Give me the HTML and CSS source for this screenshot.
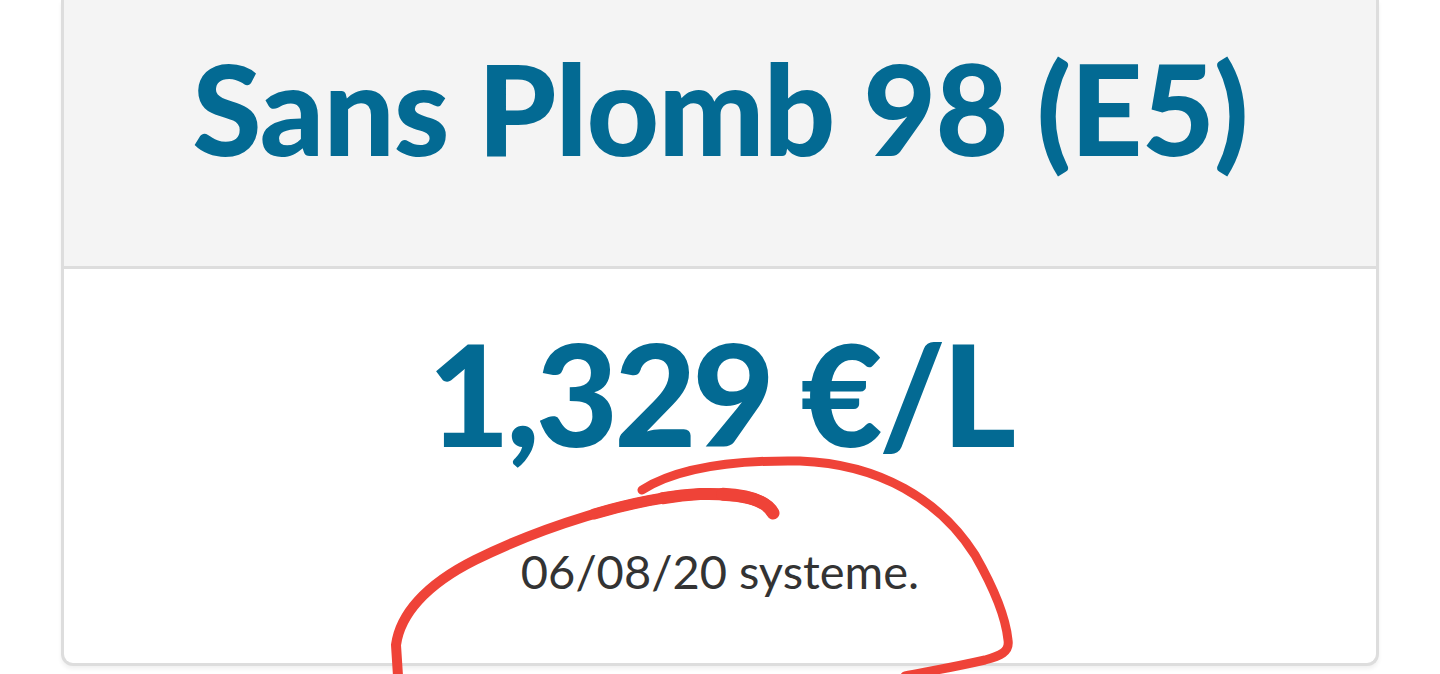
FILE: index.html
```html
<!DOCTYPE html>
<html lang="fr">
<head>
<meta charset="utf-8">
<title>Sans Plomb 98 (E5)</title>
<link rel="stylesheet" href="styles.css">
</head>
<body>
<div class="page">
  <div class="card">
    <div class="card-header">
      <h1 class="fuel-name">Sans Plomb 98 (E5)</h1>
    </div>
    <div class="card-body">
      <div class="price">1,329 €/L</div>
      <div class="date">06/08/20 systeme.</div>
    </div>
  </div>
  <svg class="scribble" width="1440" height="674" viewBox="0 0 1440 674" aria-hidden="true">
    <path d="M642 490 C 680 466, 740 460, 800 461 C 880 464, 940 500, 975 555 C 995 590, 1006 620, 1008 640 C 1010 652, 1000 656, 985 660 C 950 668, 925 672, 905 676" fill="none" stroke="#ef4338" stroke-width="9" stroke-linecap="round" stroke-linejoin="round"/>
    <path d="M773 513 C 765 498, 740 493, 700 494 C 630 498, 540 528, 475 560 C 425 585, 400 615, 396 645 L 398 676" fill="none" stroke="#ef4338" stroke-width="10" stroke-linecap="round" stroke-linejoin="round"/>
    <path pathLength="100" stroke-dasharray="40 200" d="M773 513 C 765 498, 740 493, 700 494 C 630 498, 540 528, 475 560 C 425 585, 400 615, 396 645 L 398 676" fill="none" stroke="#ef4338" stroke-width="11" stroke-linecap="round" stroke-linejoin="round"/>
    <path pathLength="100" stroke-dasharray="25 200" d="M773 513 C 765 498, 740 493, 700 494 C 630 498, 540 528, 475 560 C 425 585, 400 615, 396 645 L 398 676" fill="none" stroke="#ef4338" stroke-width="12" stroke-linecap="round" stroke-linejoin="round"/>
    <path pathLength="100" stroke-dasharray="12 200" d="M773 513 C 765 498, 740 493, 700 494 C 630 498, 540 528, 475 560 C 425 585, 400 615, 396 645 L 398 676" fill="none" stroke="#ef4338" stroke-width="13" stroke-linecap="round" stroke-linejoin="round"/>
  </svg>
</div>
</body>
</html>
```
FILE: styles.css
```css
html, body {
  margin: 0;
  padding: 0;
  background: #ffffff;
}
body {
  width: 1440px;
  height: 674px;
  overflow: hidden;
  font-family: "Lato", "Noto Sans", sans-serif;
}
.page {
  position: relative;
  height: 674px;
  padding: 0 61px;
  box-sizing: border-box;
}
.card {
  width: 1318px;
  box-sizing: border-box;
  border: 3px solid #dddddd;
  border-top: none;
  border-radius: 0 0 12px 12px;
  background: #ffffff;
  box-shadow: 0 3px 4px rgba(0, 0, 0, 0.06);
}
.card-header {
  height: 269px;
  box-sizing: border-box;
  padding-top: 45px;
  background: #f4f4f4;
  border-bottom: 3px solid #dddddd;
  text-align: center;
}
.fuel-name {
  margin: 0;
  font-family: "Lato", sans-serif;
  font-weight: 900;
  font-size: 126px;
  letter-spacing: -1px;
  line-height: 1;
  color: #036a93;
}
.card-body {
  height: 394px;
  box-sizing: border-box;
  padding-top: 52px;
  text-align: center;
}
.price {
  font-family: "Lato", sans-serif;
  font-weight: 900;
  font-size: 142px;
  letter-spacing: -4px;
  line-height: 1;
  color: #036a93;
}
.date {
  margin-top: 85px;
  font-family: "Lato", sans-serif;
  font-weight: 400;
  font-size: 47px;
  line-height: 1;
  color: #333333;
}
.scribble {
  position: absolute;
  left: 0;
  top: 0;
  pointer-events: none;
}
```
